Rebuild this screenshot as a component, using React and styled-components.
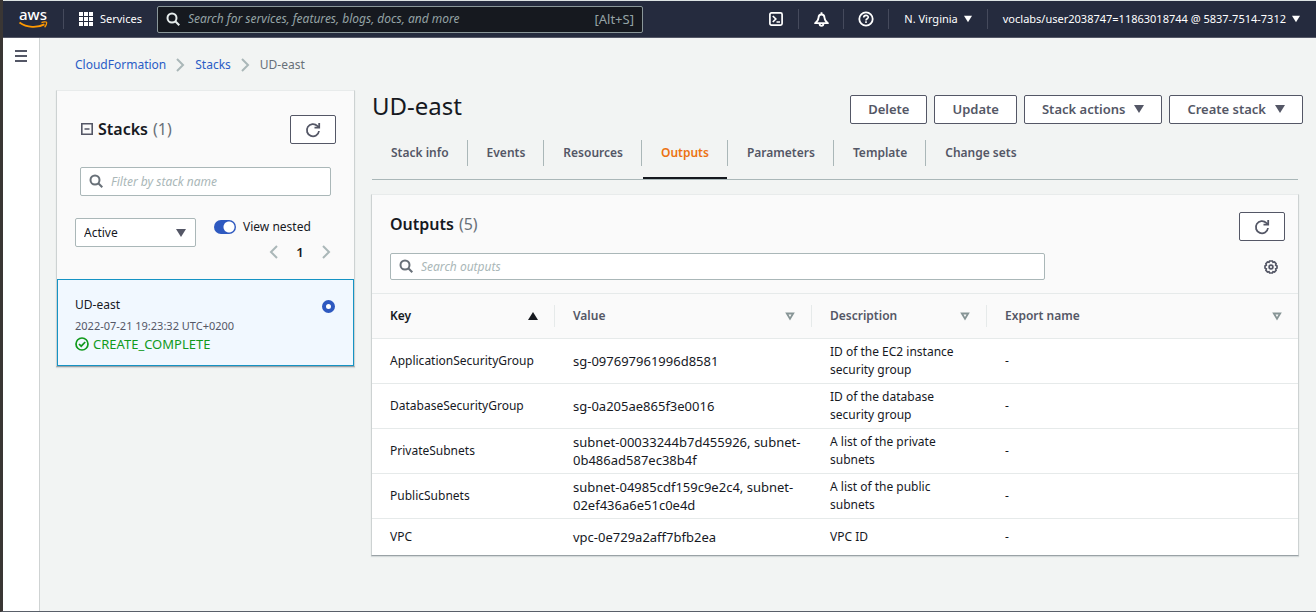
import React from "react";
import styled, { createGlobalStyle, css } from "styled-components";

const ink = "#16191f";
const slate = "#545766";
const line = "#aab7b8";
const hair = "#e6eaea";

const GlobalStyle = createGlobalStyle`
  *, *::before, *::after { box-sizing: border-box; }
  html, body, #root { min-height: 100vh; }
  body {
    margin: 0;
    background: #f2f4f3;
    color: ${ink};
    font: 12px/18px "Noto Sans", "Open Sans", sans-serif;
  }
  button, input, select { font: inherit; color: inherit; margin: 0; }
  button { cursor: pointer; }
  h1, h2, p, ul, ol { margin: 0; padding: 0; }
  ul, ol { list-style: none; }
  svg { display: block; flex: none; }
`;

const Page = styled.div`
  min-height: 100vh;
  display: flex;
  flex-direction: column;
  border-left: 3px solid #3a3634;
  border-bottom: 1px solid #595f69;
`;

const TopBar = styled.header`
  display: flex;
  align-items: center;
  height: 38px;
  padding-left: 16px;
  background: #252b3e;
  border-top: 1px solid #dde3e3;
  border-bottom: 1px solid #545766;
  color: #fff;
  font-size: 11px;
`;

const LogoLink = styled.a`
  display: block;
  margin-right: 13px;
`;

const Divider = styled.span`
  width: 1px;
  height: 20px;
  background: #454a5c;
`;

const BarButton = styled.button`
  display: flex;
  align-items: center;
  gap: 6px;
  padding: 0 15px;
  border: 0;
  background: none;
  white-space: nowrap;
`;

const IconBarButton = styled(BarButton)`
  width: 44px;
  padding: 0;
  justify-content: center;
`;

const field = css`
  display: flex;
  align-items: center;
  border: 1px solid ${line};
  border-radius: 2px;
  background: #fff;
`;

const SearchField = styled.label`
  ${field}
  flex: ${(p) => p.$flex || "none"};
  height: ${(p) => p.$height || 29}px;
  padding: 0 8px;
  gap: 7px;
  color: #687078;
`;

const GlobalSearch = styled(SearchField)`
  width: 486px;
  border-color: #8a9799;
  background: #16191f;
  color: #e6ecec;
`;

const SearchInput = styled.input`
  flex: 1;
  min-width: 0;
  border: 0;
  padding: 0;
  outline: 0;
  background: none;
  font-size: 12px;
  &::placeholder { color: ${(p) => p.$hint || line}; font-style: italic; opacity: 1; }
`;

const Shortcut = styled.span`
  color: #95a3a5;
  font-size: 13px;
`;

const BarEnd = styled.div`
  display: flex;
  align-items: center;
  margin-left: auto;
  padding-right: 1px;
`;

const Body = styled.div`
  flex: 1;
  display: flex;
`;

const SideRail = styled.nav`
  width: 37px;
  border-right: 1px solid #cfd3d3;
  background: #fff;
`;

const MenuButton = styled.button`
  display: flex;
  justify-content: center;
  width: 36px;
  padding: 12px 0;
  border: 0;
  background: none;
`;

const Content = styled.div`
  flex: 1;
  min-width: 0;
  padding: 18px 13px 18px 16px;
`;

const Crumbs = styled.ol`
  display: flex;
  align-items: center;
  gap: 10px;
  padding-left: 19px;
  line-height: 18px;
`;

const Crumb = styled.li`
  display: flex;
  align-items: center;
  gap: 10px;
  color: #687078;
  a { color: #2a5cc6; text-decoration: none; }
`;

const Columns = styled.div`
  display: flex;
  align-items: flex-start;
  gap: 16px;
  margin-top: 16px;
`;

const Panel = styled.section`
  border: 1px solid #cdd2d2;
  border-top-color: #e8ebeb;
  border-bottom-color: #9aa2a6;
  background: #fafafa;
  box-shadow: 0 1px 1px #d5dadb;
`;

const StacksPanel = styled(Panel)`
  width: 299px;
  flex: none;
`;

const StacksHead = styled.div`
  display: flex;
  align-items: center;
  justify-content: space-between;
  padding: 24px 18px 0 24px;
`;

const Heading = styled.h2`
  display: flex;
  align-items: center;
  gap: 5px;
  padding-bottom: 2px;
  font-size: 16px;
  line-height: 24px;
  font-weight: 600;
  span { font-weight: 400; color: #687078; }
`;

const Button = styled.button`
  display: flex;
  align-items: center;
  gap: 9px;
  height: 29px;
  padding: 0 17px 2px;
  border: 1px solid ${slate};
  border-radius: 2px;
  background: #fff;
  color: ${slate};
  font-size: 13px;
  font-weight: 600;
  white-space: nowrap;
`;

const SquareButton = styled(Button)`
  width: 46px;
  padding: 0;
  justify-content: center;
`;

const FilterRow = styled.div`
  display: flex;
  padding: 23px 23px 22px;
`;

const Options = styled.div`
  display: flex;
  align-items: flex-start;
  justify-content: space-between;
  padding: 0 18px 15px;
`;

const SelectBox = styled.div`
  ${field}
  display: grid;
  width: 121px;
  height: 29px;
  > * { grid-area: 1 / 1; }
  svg { justify-self: end; margin-right: 9px; pointer-events: none; color: ${slate}; }
`;

const Select = styled.select`
  appearance: none;
  width: 100%;
  height: 27px;
  border: 0;
  padding: 0 8px;
  background: none;
`;

const OptionsEnd = styled.div`
  display: flex;
  flex-direction: column;
  gap: 4px;
  width: 122px;
`;

const ToggleLabel = styled.label`
  display: flex;
  align-items: center;
  gap: 7px;
`;

const Toggle = styled.input`
  appearance: none;
  width: 22px;
  height: 14px;
  border-radius: 7px;
  background: radial-gradient(circle at 15px 7px, #fff 5px, transparent 6px) #2e59c0;
`;

const Pager = styled.div`
  display: flex;
  align-items: center;
  justify-content: space-between;
  margin-left: 55px;
  margin-right: 5px;
  height: 24px;
  font-size: 13px;
  font-weight: 600;
`;

const PlainButton = styled.button`
  display: flex;
  padding: 0;
  border: 0;
  background: none;
`;

const StackItem = styled.label`
  display: flex;
  justify-content: space-between;
  height: 87px;
  padding: 16px 18px 0 17px;
  border: 1px solid #1593c4;
  background: #f1f8ff;
`;

const StackTime = styled.p`
  margin: 3px 0 0;
  font-size: 11px;
  line-height: 18px;
  color: ${slate};
`;

const Status = styled.p`
  display: flex;
  align-items: center;
  gap: 4px;
  font-size: 13px;
  color: #109a1c;
`;

const Radio = styled.input`
  appearance: none;
  width: 13px;
  height: 13px;
  margin: 4px 0 0;
  border: 4px solid #2e59c0;
  border-radius: 50%;
  background: #fff;
`;

const Main = styled.main`
  flex: 1;
  min-width: 0;
`;

const TitleRow = styled.div`
  display: flex;
  justify-content: space-between;
  padding-left: 1px;
  h1 { font-size: 24px; line-height: 32px; font-weight: 400; }
`;

const Actions = styled.div`
  display: flex;
  gap: 7px;
  margin-top: 5px;
`;

const Tabs = styled.ul`
  display: flex;
  margin: 11px 5px 14px 1px;
  border-bottom: 1px solid ${line};
`;

const Tab = styled.li`
  height: 44px;
  padding-top: 5px;
  font-weight: 600;
  a {
    display: block;
    height: 26px;
    padding: 0 18px 0 19px;
    border-right: 1px solid ${line};
    line-height: 26px;
    color: ${(p) => (p.$active ? "#ec7211" : slate)};
    text-decoration: none;
  }
  &:last-child a { border-right: 0; }
  ${(p) => p.$active && css`
    background: linear-gradient(${ink}, ${ink}) 1px 100% / calc(100% - 2px) 2px no-repeat;
  `}
`;

const OutputsPanel = styled(Panel)`
  margin-right: 4px;
`;

const OutputsHead = styled.div`
  display: flex;
  align-items: flex-start;
  justify-content: space-between;
  padding: 17px 13px 0 18px;
`;

const OutputsTools = styled.div`
  display: flex;
  align-items: center;
  justify-content: space-between;
  padding: 12px 20px 13px 18px;
`;

const OutputsSearch = styled(SearchField)`
  flex: 0 1 655px;
`;

const Table = styled.table`
  width: 100%;
  table-layout: fixed;
  border-collapse: separate;
  border-spacing: 0;
  background: #fff;
`;

const Th = styled.th`
  height: 45px;
  padding: 0;
  border-top: 1px solid ${hair};
  background: #fafafa;
  text-align: left;
  font-weight: 600;
  color: ${(p) => (p.$sorted ? ink : slate)};
  div {
    display: flex;
    align-items: center;
    justify-content: space-between;
    height: 22px;
    padding: 0 16px 0 18px;
    border-right: 1px solid ${hair};
  }
  &:last-child div { border-right: 0; }
`;

const Td = styled.td`
  height: 37px;
  padding: 4px 18px;
  border-top: 1px solid ${hair};
  vertical-align: middle;
`;

const ValueTd = styled(Td)`
  padding-right: 8px;
  font-size: 13px;
`;

const SearchIcon = () => (
  <svg width="15" height="15" viewBox="0 0 15 15" fill="none" stroke="currentColor" strokeWidth="2">
    <circle cx="6" cy="6" r="4.5" />
    <path d="M9.3 9.3l4 4" />
  </svg>
);

const Caret = ({ size = 8, up }) => (
  <svg width={size} height={size} viewBox="0 0 10 10" fill="currentColor">
    <path d={up ? "M0 9h10L5 1z" : "M0 1h10L5 9z"} />
  </svg>
);

const SortIcon = () => (
  <svg width="10" height="9" viewBox="0 0 10 9" fill="none" stroke="#879596" strokeWidth="1.8">
    <path d="M1.8 1.5h6.4L5 6.8z" />
  </svg>
);

const Chevron = ({ left }) => (
  <svg width="9" height="14" viewBox="0 0 9 14" fill="none" stroke="#aab7b8" strokeWidth="2">
    <path d={left ? "M8 1L2 7l6 6" : "M1 1l6 6-6 6"} />
  </svg>
);

const RefreshIcon = () => (
  <svg width="16" height="16" viewBox="0 0 16 16" fill="none" stroke="currentColor" strokeWidth="1.8">
    <path d="M14 9A6.100 6.100 0 1 1 12.300 3.900L14 5.300" />
    <path d="M14.200 1v4.700H9.500" />
  </svg>
);

const GearIcon = () => (
  <svg width="14" height="14" viewBox="0 0 14 14" fill="none" stroke={slate} strokeWidth="1.7">
    <path d="M5.600 1h2.800l.6 1.300 1.500-.3 1.600 1.800-.4 1.300L13 6v2l-1.300.9.4 1.300-1.600 1.800-1.500-.3L8.400 13H5.600L5 11.700l-1.500.3-1.600-1.800.4-1.300L1 8V6l1.300-.9-.4-1.300L3.500 2l1.500.3z" />
    <circle cx="7" cy="7" r="1.900" />
  </svg>
);

const AwsLogo = () => (
  <svg width="31" height="34" viewBox="0 -5 31 34" overflow="visible">
    <text x="0" y="13" fill="#fff" fontFamily="Noto Sans, sans-serif" fontSize="15" fontWeight="500">aws</text>
    <path d="M0.500 15.500c7.500 5.500 18 5.500 25 1.800" fill="none" stroke="#ff9900" strokeWidth="1.900" />
    <path d="M22.500 15.600c2-1 4.500-1 5-.4s-.2 3.400-1.900 5" fill="none" stroke="#ff9900" strokeWidth="1.300" />
  </svg>
);

const ServicesIcon = () => (
  <svg width="15" height="15" viewBox="0 0 15 15" fill="#fff">
    {[0, 5, 10].map((y) => [0, 5, 10].map((x) => <rect key={`${x}-${y}`} x={x} y={y} width="4" height="4" />))}
  </svg>
);

const ShellIcon = () => (
  <svg width="14" height="14" viewBox="0 0 14 14" fill="none" stroke="#fff" strokeWidth="1.700">
    <rect x=".9" y=".9" width="12.200" height="12.200" rx="1.500" />
    <path d="M3.800 4l3 3-3 3M7.500 10h3.500" />
  </svg>
);

const BellIcon = () => (
  <svg width="15" height="15" viewBox="0 0 14 14" fill="none" stroke="#fff" strokeWidth="1.700" strokeLinejoin="round">
    <path d="M1 10.400c2-1.300 3-2.700 3.200-5C4.300 3.500 5.400 2.300 7 2.300s2.700 1.200 2.800 3.100c.2 2.300 1.200 3.700 3.200 5z" />
    <path d="M7 .300v2M5.200 10.800c0 2.900 3.600 2.900 3.600 0" />
  </svg>
);

const HelpIcon = () => (
  <svg width="16" height="16" viewBox="0 0 16 16" fill="none" stroke="#fff" strokeWidth="1.800">
    <circle cx="8" cy="8" r="6.700" />
    <path d="M5.700 6.600c0-3 4.600-2.900 4.600-.3 0 1.500-2.300 1.400-2.300 3.100M8 10.300v1.600" strokeWidth="1.600" />
  </svg>
);

const CollapseIcon = () => (
  <svg width="12" height="12" viewBox="0 0 12 12" fill="none" stroke={slate} strokeWidth="1.600">
    <path d="M.8.800h10.400v10.400H.800zM3.500 6h5" />
  </svg>
);

const CheckIcon = () => (
  <svg width="14" height="14" viewBox="0 0 14 14" fill="none" stroke="currentColor" strokeWidth="1.700">
    <circle cx="7" cy="7" r="6" />
    <path d="M4 7l2.200 2.200L10.200 5" />
  </svg>
);

const MenuIcon = () => (
  <svg width="12" height="12" viewBox="0 0 12 12" stroke={slate} strokeWidth="2">
    <path d="M0 1h12M0 6h12M0 11h12" />
  </svg>
);

const tabs = ["Stack info", "Events", "Resources", "Outputs", "Parameters", "Template", "Change sets"];

const outputs = [
  ["ApplicationSecurityGroup", "sg-097697961996d8581", "ID of the EC2 instance security group"],
  ["DatabaseSecurityGroup", "sg-0a205ae865f3e0016", "ID of the database security group"],
  ["PrivateSubnets", "subnet-00033244b7d455926, subnet-0b486ad587ec38b4f", "A list of the private subnets"],
  ["PublicSubnets", "subnet-04985cdf159c9e2c4, subnet-02ef436a6e51c0e4d", "A list of the public subnets"],
  ["VPC", "vpc-0e729a2aff7bfb2ea", "VPC ID"],
];

export default function App() {
  return (
    <Page>
      <GlobalStyle />
      <TopBar>
        <LogoLink href="#" aria-label="AWS home"><AwsLogo /></LogoLink>
        <Divider />
        <BarButton><ServicesIcon />Services</BarButton>
        <GlobalSearch $height={27}>
          <SearchIcon />
          <SearchInput $hint="#95a3a5" aria-label="Search" placeholder="Search for services, features, blogs, docs, and more" />
          <Shortcut>[Alt+S]</Shortcut>
        </GlobalSearch>
        <BarEnd>
          <IconBarButton aria-label="CloudShell"><ShellIcon /></IconBarButton>
          <Divider />
          <IconBarButton aria-label="Notifications"><BellIcon /></IconBarButton>
          <Divider />
          <IconBarButton aria-label="Help"><HelpIcon /></IconBarButton>
          <Divider />
          <BarButton>N. Virginia<Caret /></BarButton>
          <Divider />
          <BarButton>voclabs/user2038747=11863018744 @ 5837-7514-7312<Caret /></BarButton>
        </BarEnd>
      </TopBar>
      <Body>
        <SideRail>
          <MenuButton aria-label="Open navigation"><MenuIcon /></MenuButton>
        </SideRail>
        <Content>
          <nav aria-label="Breadcrumbs">
            <Crumbs>
              <Crumb><a href="#">CloudFormation</a><Chevron /></Crumb>
              <Crumb><a href="#">Stacks</a><Chevron /></Crumb>
              <Crumb>UD-east</Crumb>
            </Crumbs>
          </nav>
          <Columns>
            <StacksPanel>
              <StacksHead>
                <Heading><CollapseIcon />Stacks <span>(1)</span></Heading>
                <SquareButton aria-label="Refresh stacks"><RefreshIcon /></SquareButton>
              </StacksHead>
              <FilterRow>
                <SearchField $flex="1">
                  <SearchIcon />
                  <SearchInput aria-label="Filter stacks" placeholder="Filter by stack name" />
                </SearchField>
              </FilterRow>
              <Options>
                <SelectBox>
                  <Select aria-label="Stack status"><option>Active</option></Select>
                  <Caret size={10} />
                </SelectBox>
                <OptionsEnd>
                  <ToggleLabel><Toggle type="checkbox" defaultChecked />View nested</ToggleLabel>
                  <Pager>
                    <PlainButton aria-label="Previous page"><Chevron left /></PlainButton>
                    <PlainButton>1</PlainButton>
                    <PlainButton aria-label="Next page"><Chevron /></PlainButton>
                  </Pager>
                </OptionsEnd>
              </Options>
              <StackItem>
                <div>
                  <p>UD-east</p>
                  <StackTime>2022-07-21 19:23:32 UTC+0200</StackTime>
                  <Status><CheckIcon />CREATE_COMPLETE</Status>
                </div>
                <Radio type="radio" name="stack" defaultChecked />
              </StackItem>
            </StacksPanel>
            <Main>
              <TitleRow>
                <h1>UD-east</h1>
                <Actions>
                  <Button>Delete</Button>
                  <Button>Update</Button>
                  <Button>Stack actions<Caret size={10} /></Button>
                  <Button>Create stack<Caret size={10} /></Button>
                </Actions>
              </TitleRow>
              <Tabs>
                {tabs.map((name) => (
                  <Tab key={name} $active={name === "Outputs"}><a href="#">{name}</a></Tab>
                ))}
              </Tabs>
              <OutputsPanel>
                <OutputsHead>
                  <Heading>Outputs <span>(5)</span></Heading>
                  <SquareButton aria-label="Refresh outputs"><RefreshIcon /></SquareButton>
                </OutputsHead>
                <OutputsTools>
                  <OutputsSearch $height={27}>
                    <SearchIcon />
                    <SearchInput aria-label="Search outputs" placeholder="Search outputs" />
                  </OutputsSearch>
                  <PlainButton aria-label="Preferences"><GearIcon /></PlainButton>
                </OutputsTools>
                <Table>
                  <colgroup>
                    <col width="183" />
                    <col width="257" />
                    <col width="175" />
                    <col />
                  </colgroup>
                  <thead>
                    <tr>
                      <Th $sorted><div>Key<Caret size={10} up /></div></Th>
                      <Th><div>Value<SortIcon /></div></Th>
                      <Th><div>Description<SortIcon /></div></Th>
                      <Th><div>Export name<SortIcon /></div></Th>
                    </tr>
                  </thead>
                  <tbody>
                    {outputs.map(([key, value, description]) => (
                      <tr key={key}>
                        <Td>{key}</Td>
                        <ValueTd>{value}</ValueTd>
                        <Td>{description}</Td>
                        <Td>-</Td>
                      </tr>
                    ))}
                  </tbody>
                </Table>
              </OutputsPanel>
            </Main>
          </Columns>
        </Content>
      </Body>
    </Page>
  );
}
